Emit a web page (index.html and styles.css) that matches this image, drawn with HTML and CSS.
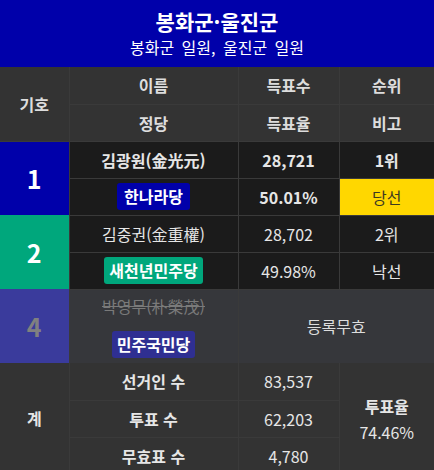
FILE: index.html
```html
<!DOCTYPE html>
<html lang="ko">
<head>
<meta charset="utf-8">
<title>봉화군·울진군</title>
<link rel="stylesheet" href="styles.css">
</head>
<body>
<div class="title">
  <div class="t1">봉화군·울진군</div>
  <div class="t2">봉화군 일원, 울진군 일원</div>
</div>
<table class="res">
  <colgroup><col class="c1"><col class="c2"><col class="c3"><col class="c4"></colgroup>
  <thead>
    <tr><th rowspan="2" class="hsym">기호</th><th>이름</th><th>득표수</th><th>순위</th></tr>
    <tr><th>정당</th><th>득표율</th><th>비고</th></tr>
  </thead>
  <tbody>
    <tr class="win"><td rowspan="2" class="sym s1">1</td><td>김광원(金光元)</td><td>28,721</td><td>1위</td></tr>
    <tr class="win"><td><span class="badge b-hn">한나라당</span></td><td>50.01%</td><td class="elected">당선</td></tr>
    <tr><td rowspan="2" class="sym s2">2</td><td>김중권(金重權)</td><td>28,702</td><td>2위</td></tr>
    <tr><td><span class="badge b-mj">새천년민주당</span></td><td>49.98%</td><td>낙선</td></tr>
    <tr class="void"><td rowspan="2" class="sym s4">4</td><td class="struck">박영무(朴榮茂)</td><td colspan="2" rowspan="2" class="invalid">등록무효</td></tr>
    <tr class="void"><td class="vparty"><span class="badge b-mk">민주국민당</span></td></tr>
  </tbody>
  <tfoot>
    <tr><td rowspan="3" class="tsym">계</td><td class="lab">선거인 수</td><td>83,537</td><td rowspan="3" class="turn"><b>투표율</b><br>74.46%</td></tr>
    <tr><td class="lab">투표 수</td><td>62,203</td></tr>
    <tr><td class="lab">무효표 수</td><td>4,780</td></tr>
  </tfoot>
</table>
</body>
</html>
```

FILE: styles.css
```css
html, body {
  margin: 0;
  padding: 0;
  background: #1b1b1b;
}
body {
  font-family: "Noto Sans CJK KR", "Noto Sans", sans-serif;
  color: #e6e6e6;
}
.title {
  background: #0000aa;
  color: #fff;
  height: 67px;
  display: flex;
  flex-direction: column;
  align-items: center;
  justify-content: center;
  gap: 2px;
}
.t1 {
  font-size: 21px;
  font-weight: bold;
  line-height: 25px;
}
.t2 {
  font-size: 16px;
  line-height: 22px;
  word-spacing: 3px;
}
.res {
  width: 434px;
  table-layout: fixed;
  border-collapse: collapse;
  font-size: 16px;
}
.c1 { width: 69px; }
.c2 { width: 169px; }
.c3 { width: 101px; }
.c4 { width: 95px; }
.res tr { height: 37px; }
.res th, .res td {
  border: 1px solid #3a3a3a;
  text-align: center;
  vertical-align: middle;
  padding: 0;
  line-height: 20px;
}
.res tr > :first-child { border-left: none; }
.res tr > :last-child { border-right: none; }
.res td.sym, .res th.hsym, .res td.tsym { border-left: none; }
.res thead th {
  background: #333;
  color: #ddd;
  font-weight: bold;
}
.res thead tr:first-child th { border-top: none; }
.res tbody td {
  background: #1b1b1b;
}
.win td { font-weight: bold; }
.sym {
  font-size: 25px;
  font-weight: bold;
  color: #fff;
  border-top: none !important;
  border-bottom: none !important;
}
.res td.s1 { background: #0000aa; }
.res td.s2 { background: #00a77c; }
.res td.s4 { background: #3a3b9c; color: #808080; }
.res td.elected {
  background: #ffd700;
  color: #3d3a20;
  font-weight: normal;
}
.badge {
  display: inline-block;
  color: #fff;
  font-weight: bold;
  font-size: 16px;
  padding: 3px 5px;
  border-radius: 3px;
  line-height: 21px;
}
.b-hn { background: #0000aa; padding: 3px 7px; }
.b-mj { background: #00a77c; padding: 3px 5px; }
.b-mk { background: #2f2f92; padding: 3px 5px; }
.res tr.void td { background: #36373b; border-bottom: none; }
.res tr.void td.sym { background: #3a3b9c; }
.res td.struck {
  color: #7a7a7a;
  text-decoration: line-through;
  border-bottom: 1px solid #36373b;
  vertical-align: top;
  padding-top: 6px;
}
.res td.vparty { border-top: 1px solid #36373b; }
.res td.invalid { color: #ddd; }
.res tfoot td {
  background: #333;
  color: #e6e6e6;
}
.res tfoot tr:first-child td { border-top: none; }
.res td.tsym { font-weight: bold; font-size: 16px; }
.res td.lab { font-weight: bold; }
.res td.turn { line-height: 26px; padding-top: 2px; }
```
